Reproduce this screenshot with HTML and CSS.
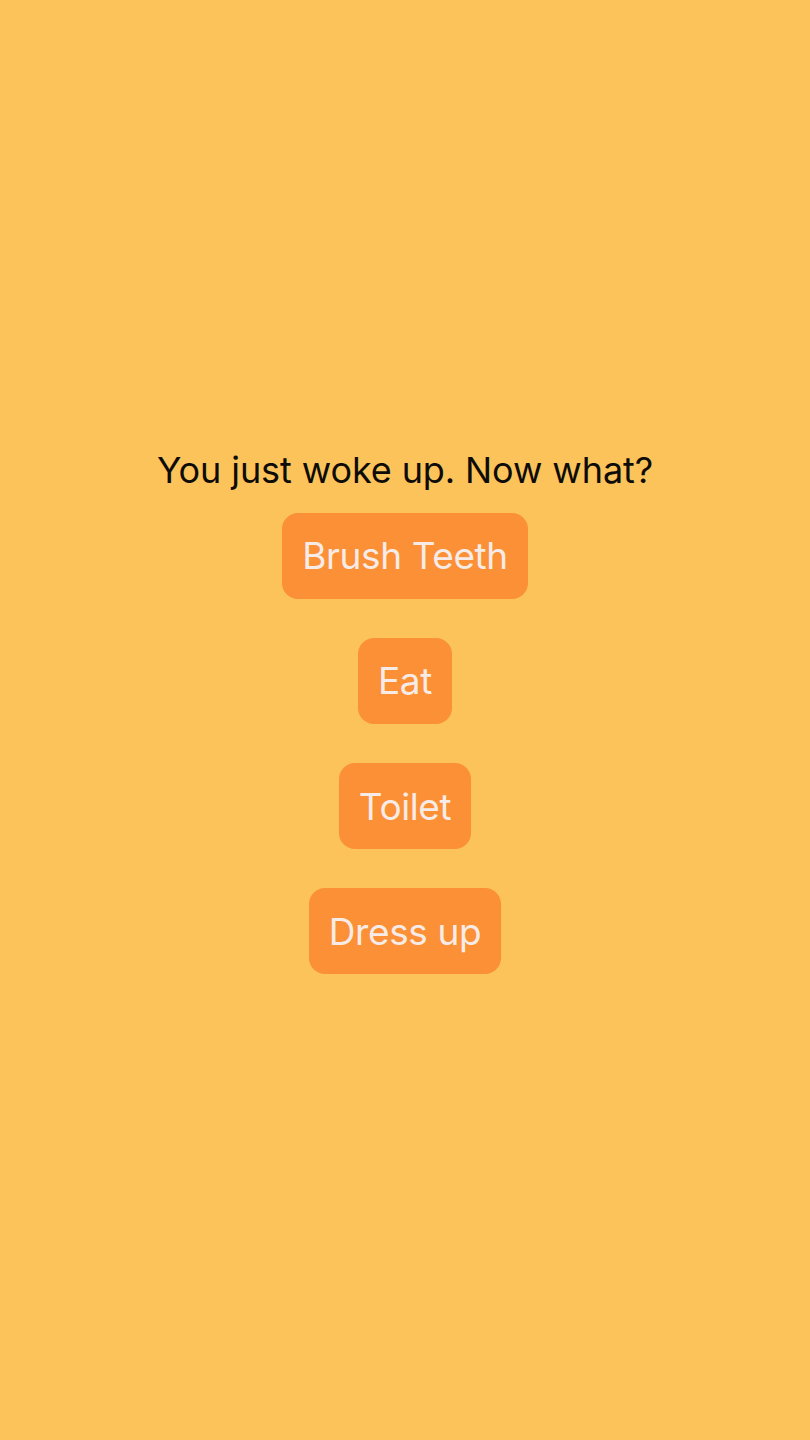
FILE: index.html
```html
<!DOCTYPE html>
<html>
<head>
<meta charset="utf-8">
<link rel="stylesheet" href="styles.css">
</head>
<body>
<main class="screen">
  <h1 class="prompt">You just woke up. Now what?</h1>
  <div class="choices">
    <button class="choice">Brush Teeth</button>
    <button class="choice">Eat</button>
    <button class="choice">Toilet</button>
    <button class="choice">Dress up</button>
  </div>
</main>
</body>
</html>
```
FILE: styles.css
```css
html, body {
  margin: 0;
  padding: 0;
  background: #fcc35b;
}
.screen {
  width: 810px;
  height: 1440px;
  display: flex;
  flex-direction: column;
  align-items: center;
  justify-content: center;
  font-family: Inter, "Noto Sans", sans-serif;
  box-sizing: border-box;
  padding-bottom: 17px;
}
.prompt {
  margin: 0;
  font-size: 36px;
  font-weight: 400;
  line-height: 42px;
  color: #0e0c08;
  letter-spacing: -0.1px;
}
.choices {
  margin-top: 22px;
  display: flex;
  flex-direction: column;
  align-items: center;
  gap: 39.3px;
}
.choice {
  height: 86px;
  padding: 0 20px;
  border: none;
  border-radius: 16px;
  background: #fb9036;
  color: #f6ebe6;
  font-family: Inter, "Noto Sans", sans-serif;
  font-size: 37px;
  font-weight: 400;
  letter-spacing: -0.4px;
}
```
